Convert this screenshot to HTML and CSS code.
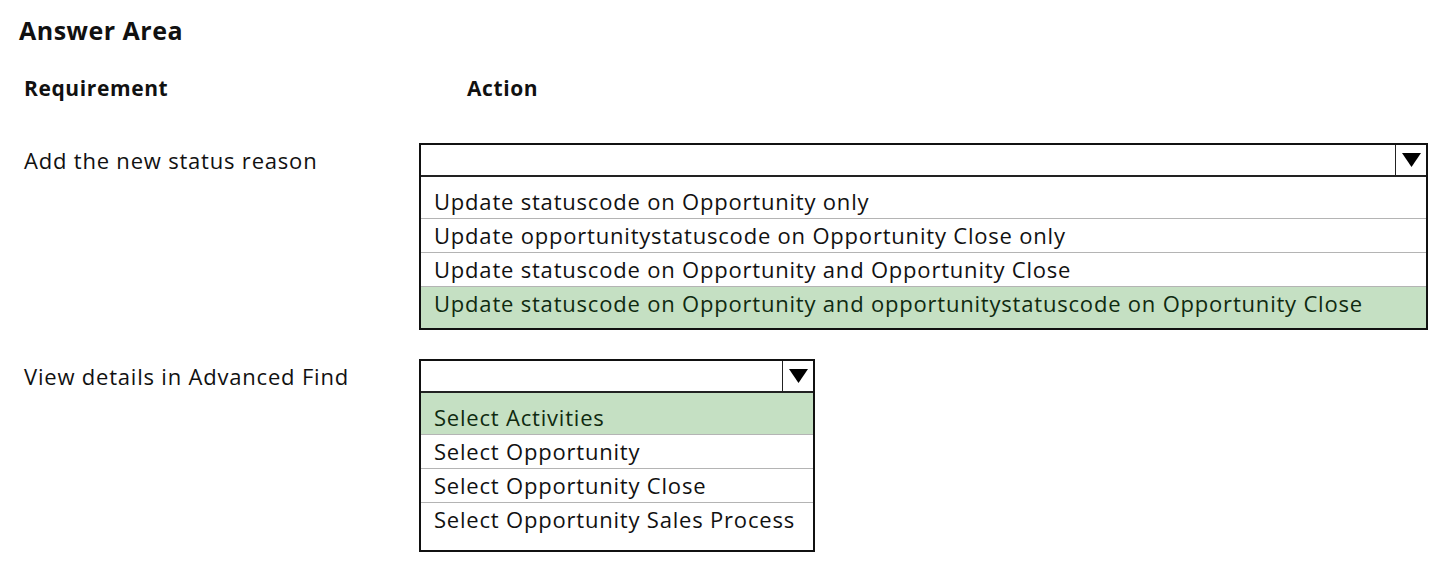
FILE: index.html
```html
<!DOCTYPE html>
<html lang="en">
<head>
<meta charset="utf-8">
<title>Answer Area</title>
<link rel="stylesheet" href="styles.css">
</head>
<body>
<main class="page">
  <h1 class="title">Answer Area</h1>
  <div class="grid">
    <div class="col-head">Requirement</div>
    <div class="col-head action">Action</div>

    <div class="req">Add the new status reason</div>
    <div class="dropdown wide">
      <div class="dd-head">
        <span class="dd-arrow"><svg width="19" height="14" viewBox="0 0 19 14"><path d="M0 0H19L9.5 14Z" fill="#000"/></svg></span>
      </div>
      <ul class="dd-list">
        <li>Update statuscode on Opportunity only</li>
        <li>Update opportunitystatuscode on Opportunity Close only</li>
        <li>Update statuscode on Opportunity and Opportunity Close</li>
        <li class="selected">Update statuscode on Opportunity and opportunitystatuscode on Opportunity Close</li>
      </ul>
    </div>

    <div class="req second">View details in Advanced Find</div>
    <div class="dropdown narrow second">
      <div class="dd-head">
        <span class="dd-arrow"><svg width="19" height="14" viewBox="0 0 19 14"><path d="M0 0H19L9.5 14Z" fill="#000"/></svg></span>
      </div>
      <ul class="dd-list long-end">
        <li class="selected">Select Activities</li>
        <li>Select Opportunity</li>
        <li>Select Opportunity Close</li>
        <li>Select Opportunity Sales Process</li>
      </ul>
    </div>
  </div>
</main>
</body>
</html>
```

FILE: styles.css
```css
html, body {
  margin: 0;
  padding: 0;
  background: #fff;
}

body {
  font-family: "Open Sans", "Noto Sans", sans-serif;
  color: #111;
}

.page {
  padding: 15px 0 0 24px;
}

.title {
  margin: 0 0 0 -5px;
  font-size: 25px;
  line-height: 30px;
  font-weight: 700;
  letter-spacing: 0.5px;
}

.grid {
  display: grid;
  grid-template-columns: 395px auto;
  justify-content: start;
  margin-top: 28px;
}

.col-head {
  font-size: 21px;
  line-height: 30px;
  font-weight: 700;
  letter-spacing: 0.6px;
  margin-bottom: 40px;
}

.col-head.action {
  padding-left: 48px;
}

.req {
  font-size: 22px;
  line-height: 34px;
  letter-spacing: 0.8px;
}

.req.second {
  margin-top: 29px;
}

.dropdown {
  border: 2px solid #111;
  box-sizing: border-box;
  background: #fff;
}

.dropdown.wide {
  width: 1009px;
}

.dropdown.narrow {
  width: 396px;
}

.dropdown.second {
  margin-top: 29px;
}

.dd-head {
  height: 30px;
  border-bottom: 2px solid #222;
  display: flex;
  justify-content: flex-end;
}

.dd-arrow {
  width: 30px;
  border-left: 1px solid #222;
  display: flex;
  align-items: center;
  justify-content: center;
}

.dd-arrow svg {
  display: block;
}

.dd-list {
  list-style: none;
  margin: 0;
  padding: 0;
}

.dd-list li {
  font-size: 22px;
  line-height: 33px;
  letter-spacing: 0.8px;
  padding: 0 0 0 13px;
  border-bottom: 1px solid #b4b4b4;
  white-space: nowrap;
}

.dd-list li:first-child {
  padding-top: 8px;
}

.dd-list li:last-child {
  border-bottom: none;
  padding-bottom: 8px;
}

.dd-list.long-end li:last-child {
  padding-bottom: 14px;
}

.dd-list li.selected {
  background: #c5e0c3;
  color: #0f2a10;
}
```
